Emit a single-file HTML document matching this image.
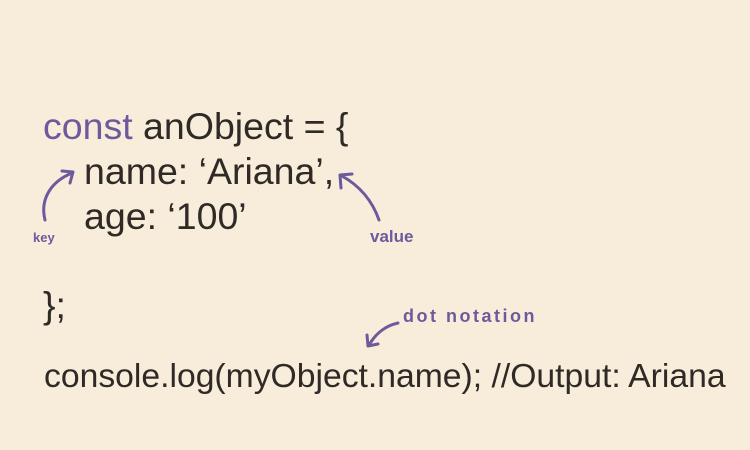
<!DOCTYPE html>
<html><head><style>
html,body{margin:0;padding:0}
body{width:750px;height:450px;background:#f8eddb;position:relative;overflow:hidden;font-family:"Liberation Sans",sans-serif;color:#2f2a26}
.t{position:absolute;white-space:nowrap;line-height:1;letter-spacing:0}
.p{color:#6c5a9c}
.h{position:absolute;font-family:"Liberation Sans",sans-serif;color:#6c5a9c;font-size:16px;white-space:nowrap;font-weight:bold}
</style></head><body>
<div class="t" style="left:43px;top:108px;font-size:37.5px"><span class="p">const</span> anObject = {</div>
<div class="t" style="left:84px;top:153px;font-size:37.5px">name: ‘Ariana’,</div>
<div class="t" style="left:84px;top:198px;font-size:37.5px">age: ‘100’</div>
<div class="t" style="left:43px;top:287px;font-size:37.5px">};</div>
<div class="t" style="left:44px;top:360px;font-size:33.7px">console.log(myObject.name); //Output: Ariana</div>
<div class="h" style="left:33px;top:230px;font-size:13px">key</div>
<div class="h" style="left:370px;top:227px;font-size:17px">value</div>
<div class="h" style="left:403px;top:306px;font-size:18px;letter-spacing:2.5px">dot notation</div>
<svg width="750" height="450" style="position:absolute;left:0;top:0" fill="none" stroke="#6c5a9c" stroke-width="3" stroke-linecap="round" stroke-linejoin="round">
<path d="M45 220 C40 200 50 182 72 173"/><path d="M62 171 L73 172 L70 183"/>
<path d="M379 220 C372 200 360 186 342 176"/><path d="M341 188 L340 175 L352 174"/>
<path d="M398 323 C385 326 376 333 369 345"/><path d="M367 335 L368 346 L378 344"/>
</svg>
</body></html>
